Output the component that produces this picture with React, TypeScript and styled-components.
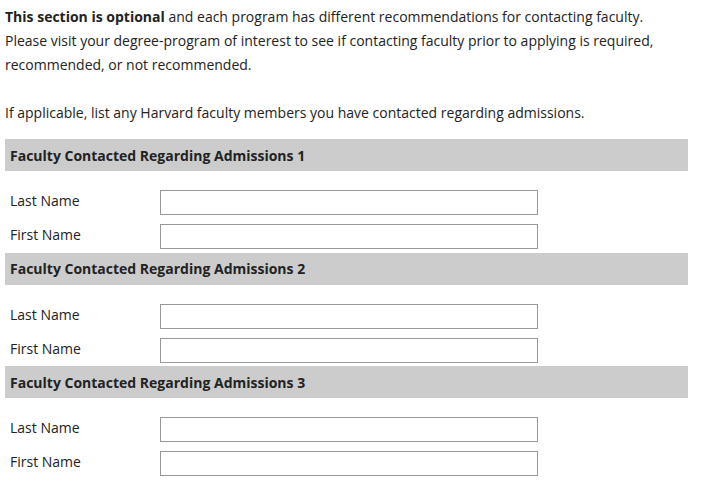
import React from 'react';
import styled, { createGlobalStyle } from 'styled-components';

const GlobalStyle = createGlobalStyle`
  body {
    margin: 0;
    background: #fff;
    font-family: "Open Sans", "Liberation Sans", sans-serif;
    font-size: 14px;
    color: #222;
  }
`;

const Page = styled.div`
  padding: 5px 15px 0 5px;
  width: 683px;
`;

const Intro = styled.p`
  margin: 0;
  line-height: 24px;
`;

const Header = styled.div`
  margin-top: 14px;
  height: 32px;
  background: #cccccc;
  padding-left: 5px;
  display: flex;
  align-items: center;
  font-weight: 700;
`;

const Fields = styled.div`
  display: grid;
  grid-template-columns: 150px 378px;
  row-gap: 9px;
  align-items: center;
  padding: 19px 0 3.5px 5px;
`;

const Label = styled.label`
  line-height: 20px;
  margin-top: -3px;
`;

const Input = styled.input`
  box-sizing: border-box;
  height: 25px;
  width: 378px;
  margin: 0;
  border: 1px solid #999;
  border-radius: 0;
  padding: 2px 4px;
  font: inherit;
`;

const Section = styled.section`
  & + & ${Header} {
    margin-top: 0;
  }
`;

function FacultySection({ index }: { index: number }) {
  return (
    <Section>
      <Header>Faculty Contacted Regarding Admissions {index}</Header>
      <Fields>
        <Label>Last Name</Label>
        <Input type="text" />
        <Label>First Name</Label>
        <Input type="text" />
      </Fields>
    </Section>
  );
}

export default function App() {
  return (
    <>
      <GlobalStyle />
      <Page>
        <Intro>
          <strong>This section is optional</strong> and each program has different recommendations for contacting faculty.
          Please visit your degree-program of interest to see if contacting faculty prior to applying is required,
          recommended, or not recommended.
          <br />
          <br />
          If applicable, list any Harvard faculty members you have contacted regarding admissions.
        </Intro>
        {[1, 2, 3].map((i) => (
          <FacultySection key={i} index={i} />
        ))}
      </Page>
    </>
  );
}
